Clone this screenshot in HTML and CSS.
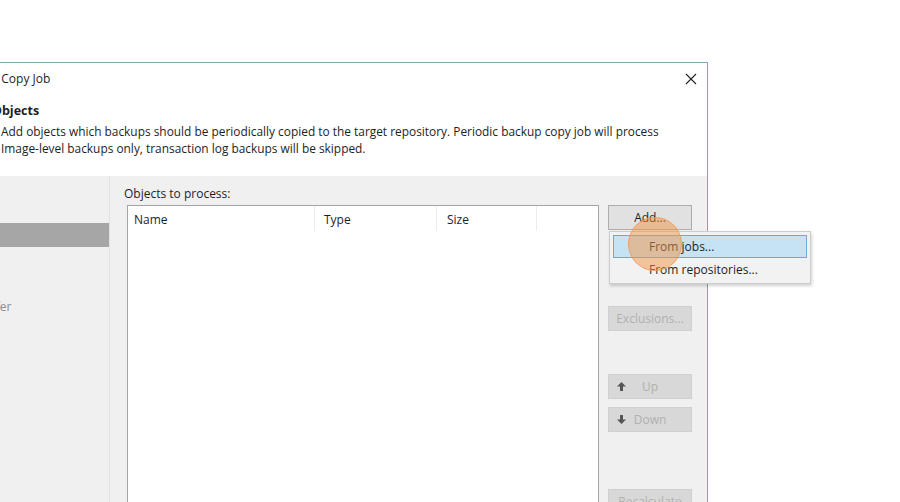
FILE: index.html
```html
<!DOCTYPE html>
<html lang="en">
<head>
  <meta charset="UTF-8" />
  <title>New Backup Copy Job</title>
  <link rel="stylesheet" href="styles.css">
</head>
<body>
  <div class="wizard">
    <div class="titlebar">
      <span class="title">Backup Copy Job</span>
      <svg class="close" width="12" height="12" viewBox="0 0 12 12">
        <path d="M1 1 L11 11 M11 1 L1 11" stroke="#222" stroke-width="1.1" fill="none"/>
      </svg>
    </div>

    <div class="intro">
      <h2>Objects</h2>
      <p>Add objects which backups should be periodically copied to the target repository. Periodic backup copy job will process<br>
      Image-level backups only, transaction log backups will be skipped.</p>
    </div>

    <div class="main">
      <ul class="steps">
        <li>Job</li>
        <li class="current">Objects</li>
        <li>Target</li>
        <li>Data Transfer</li>
        <li>Schedule</li>
        <li>Summary</li>
      </ul>

      <div class="page">
        <div class="label">Objects to process:</div>
        <div class="row">
          <div class="grid">
            <div class="grid-head">
              <div class="col col-name">Name</div>
              <div class="col col-type">Type</div>
              <div class="col col-size">Size</div>
              <div class="col col-rest"></div>
            </div>
          </div>

          <div class="actions">
            <div class="add-wrap">
              <button class="btn">Add...</button>
              <div class="menu">
                <div class="menu-item active">From jobs...</div>
                <div class="menu-item">From repositories...</div>
              </div>
              <div class="click"></div>
            </div>
            <button class="btn disabled excl">Exclusions...</button>
            <button class="btn disabled arrow up-btn">
              <svg width="9" height="9" viewBox="0 0 9 9"><path d="M4.5 0 L9 4.5 H6 V9 H3 V4.5 H0 Z" fill="#555"/></svg>
              <span>Up</span>
            </button>
            <button class="btn disabled arrow">
              <svg width="9" height="9" viewBox="0 0 9 9"><path d="M4.5 9 L9 4.5 H6 V0 H3 V4.5 H0 Z" fill="#555"/></svg>
              <span>Down</span>
            </button>
            <button class="btn disabled recalc">Recalculate</button>
          </div>
        </div>
      </div>
    </div>
  </div>
</body>
</html>
```

FILE: styles.css
```css
html {
  overflow: hidden;
}

body {
  margin: 0;
  background-color: #fff;
  font-family: "Open Sans", "Noto Sans", sans-serif;
  font-size: 12px;
  color: #1e1e1e;
  overflow: hidden;
  height: 502px;
}

.wizard {
  margin-top: 62px;
  margin-left: -120px;
  width: 826px;
  border: 1px solid #7fa9ae;
  border-bottom: none;
  background-color: #fff;
}

.titlebar {
  height: 30px;
  display: flex;
  align-items: center;
  justify-content: space-between;
  padding: 0 10px 0 76px;
}

.title {
  font-size: 12px;
  padding-top: 1px;
}

.close {
  display: block;
  margin-top: 1px;
}

.intro {
  height: 83px;
  padding-left: 111px;
  overflow: hidden;
}

.intro h2 {
  margin: 9px 0 0;
  font-size: 12.5px;
  font-weight: bold;
}

.intro p {
  margin: 4px 0 0 9px;
  line-height: 17px;
  font-size: 11.9px;
}

.main {
  display: flex;
  background-color: #f0f0f0;
  height: 326px;
}

.steps {
  list-style: none;
  margin: 0;
  padding: 11px 0 0;
  width: 228px;
  border-right: 1px solid #e2e2e2;
  color: #8a8a8a;
}

.steps li {
  height: 24px;
  line-height: 24px;
  padding-left: 54px;
  margin-bottom: 12px;
}

.steps li.current {
  background-color: #a6a6a6;
  color: #fff;
}

.page {
  flex: 1;
  padding: 10px 0 0 14px;
}

.label {
  line-height: 15px;
  margin-bottom: 4px;
}

.row {
  display: flex;
  align-items: flex-start;
}

.grid {
  margin-left: 3px;
  width: 470px;
  height: 296px;
  border: 1px solid #a4a4a4;
  border-bottom: none;
  background-color: #fff;
}

.grid-head {
  display: flex;
  height: 25px;
}

.col {
  padding: 5px 0 0 6px;
  border-right: 1px solid #ececec;
  box-sizing: border-box;
}

.col-name { width: 187px; }
.col-type { width: 122px; padding-left: 9px; }
.col-size { width: 100px; padding-left: 10px; }
.col-rest { width: 60px; border-right: none; }

.actions {
  margin-left: 9px;
  width: 84px;
  display: flex;
  flex-direction: column;
}

.add-wrap {
  position: relative;
}

.btn {
  display: block;
  box-sizing: border-box;
  width: 84px;
  height: 25px;
  padding: 0;
  border: 1px solid #adadad;
  background-color: #e1e1e1;
  font-family: inherit;
  font-size: 12px;
  color: #1e1e1e;
}

.btn.disabled {
  border-color: #d0d0d0;
  background-color: #d8d8d8;
  color: #b0b0b0;
}

.excl { margin-top: 76px; }
.up-btn { margin-top: 43px; }

.arrow {
  display: flex;
  align-items: center;
  padding: 0 17px 0 8px;
  margin-bottom: 8px;
}

.arrow span {
  flex: 1;
  text-align: center;
}

.recalc { margin-top: 49px; }

.menu {
  position: absolute;
  top: 26px;
  left: 1px;
  width: 202px;
  box-sizing: border-box;
  padding: 3px 3px 2px;
  background-color: #f2f2f2;
  border: 1px solid #cccccc;
  box-shadow: 1px 2px 3px rgba(0, 0, 0, 0.18);
  z-index: 2;
}

.menu-item {
  height: 21px;
  line-height: 21px;
  padding-left: 35px;
  border: 1px solid transparent;
  color: #1e1e1e;
}

.menu-item.active {
  background-color: #c6e3f3;
  border-color: #6fa9cc;
}

.click {
  position: absolute;
  left: 20px;
  top: 12px;
  width: 52px;
  height: 52px;
  border-radius: 50%;
  background-color: rgba(242, 150, 70, 0.5);
  border: 1px solid rgba(240, 150, 80, 0.7);
  z-index: 3;
}
```
